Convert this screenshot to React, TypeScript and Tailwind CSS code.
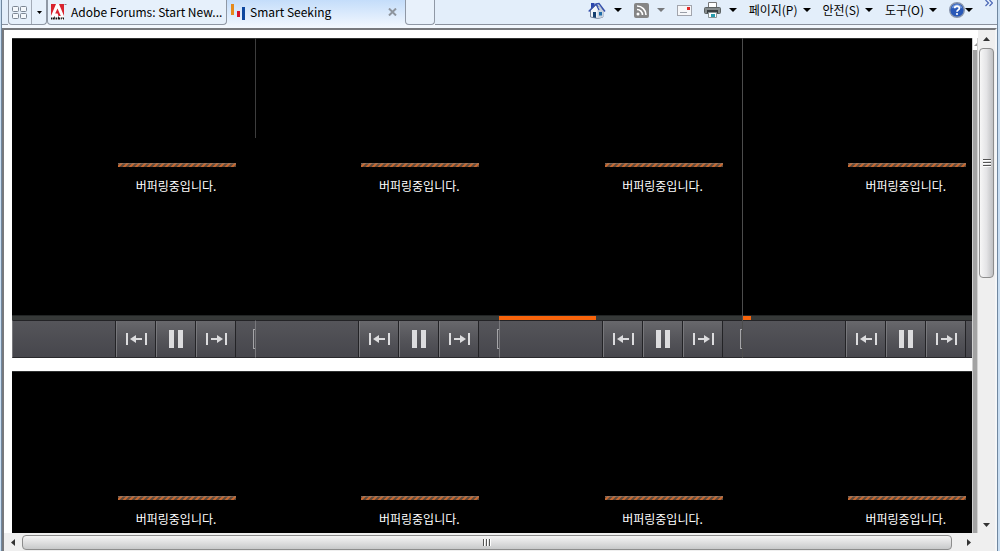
import type { ReactNode } from 'react';

interface Player {
  id: number;
  buffered: number;
}

const TOP_PLAYERS: Player[] = [
  { id: 1, buffered: 0 },
  { id: 2, buffered: 0 },
  { id: 3, buffered: 40 },
  { id: 4, buffered: 4 },
];

const BOTTOM_PLAYERS: Player[] = [
  { id: 5, buffered: 0 },
  { id: 6, buffered: 0 },
  { id: 7, buffered: 0 },
  { id: 8, buffered: 0 },
];

const Caret = ({ className = 'text-black' }: { className?: string }) => (
  <svg viewBox="0 0 8 4" className={`h-1 w-2 shrink-0 ${className}`} fill="currentColor">
    <path d="M0 0h8L4 4z" />
  </svg>
);

const QuickTabsIcon = () => (
  <svg viewBox="0 0 16 13" className="h-[13px] w-4" fill="#f4f8fc" stroke="#7d8794">
    <rect x="0.5" y="0.5" width="6" height="5" rx="1" />
    <rect x="8.5" y="0.5" width="6" height="5" rx="1" />
    <rect x="0.5" y="7.5" width="6" height="5" rx="1" />
    <rect x="8.5" y="7.5" width="6" height="5" rx="1" />
  </svg>
);

const AdobeIcon = () => (
  <svg viewBox="0 0 16 16" className="h-4 w-4 shrink-0">
    <path fill="#fff" d="M0 0h13v16H0z" />
    <path fill="#d9232e" d="M0 0h5L0 12zM8 0h5v12zM6.500 4.500L9.800 12H7.500L6.600 9.500H4.200z" />
    <path fill="#111" d="M0 15.500V13.500h1.500v2zM2 15.500h1.800V12.500H3v1H2zM4.500 13.500h1.800v2H4.500zM7 12.500h.8v1h1.200v2H7zM9.700 13.500h2v1h-1v1h-1zM12 13.500h1v2h-1z" />
    <path stroke="#555" strokeWidth="0.700" d="M13.500 0.500h2" />
  </svg>
);

const SeekingIcon = () => (
  <svg viewBox="0 0 14 16" className="h-4 w-[14px] shrink-0">
    <path fill="#e58a1c" d="M0 0h3v11H0z" />
    <path fill="#d8132b" d="M6 7h3v6H6z" />
    <path fill="#0d479f" d="M11 3h3v13h-3z" />
  </svg>
);

const HomeIcon = () => (
  <svg viewBox="0 0 18 17" className="h-[17px] w-[18px]">
    <path fill="#2a45ad" d="M3 1h3.500v5H3z" />
    <path fill="#f2f5f9" stroke="#76829a" d="M2.500 8l6-5.500L15 8v7l-5 1.500-7.500-1.500z" />
    <path fill="#c9d2df" d="M9.500 8L12 4.500 15.500 9v6l-6 1.500z" />
    <path fill="none" stroke="#3650ac" strokeWidth="1.400" d="M.7 9.500L8 2l3-.5 6 8M8 2l3 6" />
    <path fill="#17406f" d="M5 10h3v6l-3-.7z" />
    <path fill="#1f6da8" d="M11 10h3v3.500h-3z" />
  </svg>
);

const FeedIcon = () => (
  <svg viewBox="0 0 15 15" className="h-[15px] w-[15px]">
    <rect width="15" height="15" rx="2" fill="#858585" />
    <circle cx="4" cy="11" r="1.500" fill="#fff" />
    <path fill="none" stroke="#fff" strokeWidth="1.600" d="M3 6.500a5.500 5.500 0 0 1 5.500 5.500M3 3a9 9 0 0 1 9 9" />
  </svg>
);

const MailIcon = () => (
  <svg viewBox="0 0 15 11" className="h-[11px] w-[15px]">
    <rect x="0.500" y="0.500" width="14" height="10" fill="#f6f7f9" stroke="#a2a5ad" />
    <path fill="#e22a28" d="M10 2h3v3h-3z" />
    <path stroke="#9a9fa8" d="M3 7.500h7" />
  </svg>
);

const PrinterIcon = () => (
  <svg viewBox="0 0 17 16" className="h-4 w-[17px]">
    <path fill="#fff" stroke="#777" d="M4.500 6V.500h8V6" />
    <rect x="0.500" y="5.500" width="16" height="6" rx="1" fill="#858b8c" stroke="#5d6364" />
    <path fill="#383d40" d="M3 8h11v3H3z" />
    <path fill="#fff" stroke="#8a9496" d="M4.500 10.500h8v5h-8z" />
    <path fill="#269cae" d="M7 12h4v3H7z" />
  </svg>
);

const HelpIcon = () => (
  <svg viewBox="0 0 16 16" className="h-4 w-4">
    <circle cx="8" cy="8" r="7.300" fill="#2858b8" stroke="#8996ad" strokeWidth="1.400" />
    <path fill="#6d94dc" d="M2.500 6.500a5.700 5.700 0 0 1 11 0Q8 3.500 2.500 6.500z" />
    <path fill="none" stroke="#fff" strokeWidth="1.800" d="M5.700 6.300C5.700 3.500 10.500 3.600 10.400 6.200 10.300 7.800 8 8 8 9.800" />
    <circle cx="8" cy="12" r="1.100" fill="#fff" />
  </svg>
);

const StepBackIcon = () => (
  <svg viewBox="-2 0 24 12" className="h-3 w-6" fill="#dcdcde">
    <path d="M0 0h2v12H0zM19 0h2v12h-2zM4 6l6-4v3h6v2h-6v3z" />
  </svg>
);

const StepForwardIcon = () => (
  <svg viewBox="-2 0 24 12" className="h-3 w-6" fill="#dcdcde">
    <path d="M0 0h2v12H0zM19 0h2v12h-2zM17 6l-6-4v3H5v2h6v3z" />
  </svg>
);

const PauseIcon = () => (
  <svg viewBox="0 0 14 18" className="h-[18px] w-[14px]" fill="#dcdcde">
    <path d="M0 0h5v18H0zM9 0h5v18H9z" />
  </svg>
);

const Command = ({ label, children }: { label: string; children: ReactNode }) => (
  <button type="button" aria-label={label} className="flex items-center gap-2">
    {children}
  </button>
);

const MenuCommand = ({ text }: { text: string }) => (
  <button type="button" className="flex items-center gap-[5px] whitespace-nowrap">
    {text}
    <Caret />
  </button>
);

const BrowserBar = () => (
  <header className="flex h-7 shrink-0 items-start bg-[#f3f8fe] text-xs leading-4 text-black">
    <div className="h-[25px] w-[6px] border-b border-[#8b929e] bg-[#e3eefa]" />
    <div className="flex h-[25px] rounded-b-sm border border-t-0 border-[#8f98a5] bg-[#e6f0fb]">
      <button type="button" aria-label="Quick tabs" className="flex w-[23px] items-center justify-center border-r border-[#a3abb7]">
        <QuickTabsIcon />
      </button>
      <button type="button" aria-label="Tab list" className="flex w-[14px] items-center justify-center">
        <svg viewBox="0 0 5 3" className="h-[3px] w-[5px]">
          <path d="M0 0h5L2.500 3z" />
        </svg>
      </button>
    </div>
    <a href="#forums" className="flex h-[25px] w-[180px] items-center gap-1 rounded-b-sm border border-t-0 border-[#8f98a5] bg-[#e6f0fb] pl-[3px] whitespace-nowrap">
      <AdobeIcon />
      Adobe Forums: Start New...
    </a>
    <div className="flex h-7 w-[178px] items-start gap-[5px] bg-linear-to-b from-[#c4ddfa] to-[#f3f8fe] pt-1 pl-1">
      <SeekingIcon />
      <a href="#seeking" className="flex-1 whitespace-nowrap">Smart Seeking</a>
      <button type="button" aria-label="Close tab" className="mt-1 mr-2 h-2 w-[9px]">
        <svg viewBox="0 0 9 8" className="h-2 w-[9px]" stroke="#8e959e" strokeWidth="2">
          <path d="M1 0.500l7 7M8 0.500l-7 7" />
        </svg>
      </button>
    </div>
    <button type="button" aria-label="New tab" className="h-[25px] w-[30px] rounded-b-sm border border-t-0 border-[#8f98a5] bg-[#e8f1fb]" />
    <nav className="flex h-[25px] flex-1 items-center justify-end gap-3 border-b border-[#8b929e] bg-[#e3eefa] pr-1 pb-1">
      <Command label="Home">
        <HomeIcon />
        <Caret />
      </Command>
      <Command label="Feeds">
        <FeedIcon />
        <Caret className="text-[#77797c]" />
      </Command>
      <Command label="Mail">
        <MailIcon />
      </Command>
      <Command label="Print">
        <PrinterIcon />
        <Caret />
      </Command>
      <MenuCommand text="페이지(P)" />
      <MenuCommand text="안전(S)" />
      <MenuCommand text="도구(O)" />
      <button type="button" aria-label="Help" className="flex items-center">
        <HelpIcon />
        <Caret />
      </button>
      <button type="button" aria-label="More commands" className="self-start">
        <svg viewBox="0 0 8 7" className="h-[7px] w-2" fill="none" stroke="#4a66b5" strokeWidth="1.200">
          <path d="M0.500 0l3 3-3 3M4.500 0l3 3-3 3" />
        </svg>
      </button>
    </nav>
  </header>
);

const ControlButton = ({ label, children }: { label: string; children: ReactNode }) => (
  <button
    type="button"
    aria-label={label}
    className="flex w-10 items-center justify-center border-r border-l border-r-[#232326] border-l-[#77777b] bg-linear-to-b from-[#68686c] via-[#55555a] to-[#47474d]"
  >
    {children}
  </button>
);

const PlayerPane = ({ player }: { player: Player }) => (
  <section className="min-w-0">
    <div className="h-[277px] border-t border-[#2e3030] bg-black pt-[124px]">
      <div className="ml-[106px] w-[118px]">
        <svg className="h-1 w-full" aria-hidden="true">
          <defs>
            <pattern id={`stripe-${player.id}`} width="6" height="4" patternUnits="userSpaceOnUse">
              <rect width="6" height="4" fill="#5e4a3c" />
              <path stroke="#c9682f" strokeWidth="2" d="M-1 5l6-6M5 5l6-6M-7 5l6-6" />
              <path fill="#8a827c" fillOpacity="0.500" d="M0 0h6v1H0z" />
            </pattern>
          </defs>
          <rect width="100%" height="4" fill={`url(#stripe-${player.id})`} />
        </svg>
        <p className="mt-[11px] -ml-[2px] text-center text-xs leading-4 whitespace-nowrap text-white">버퍼링중입니다.</p>
      </div>
    </div>
    <div className="h-[5px] border-t border-[#222525] bg-[#363938]">
      <div className="h-1 bg-[#f8640c]" style={{ width: `${player.buffered}%` }} />
    </div>
    <div className="flex h-[38px] border-t border-b border-l border-t-[#232326] border-b-[#29292c] border-l-[#77777b] bg-linear-to-b from-[#55555a] to-[#46464c]">
      <div className="w-[103px] border-r border-[#232326]" />
      <ControlButton label="Previous">
        <StepBackIcon />
      </ControlButton>
      <ControlButton label="Pause">
        <PauseIcon />
      </ControlButton>
      <ControlButton label="Next">
        <StepForwardIcon />
      </ControlButton>
      <div className="flex flex-1 items-center justify-end">
        <div className="h-5 w-[2px] border-y border-l border-[#a5a5a8]" />
      </div>
    </div>
  </section>
);

const PlayerRow = ({ players, children }: { players: Player[]; children?: ReactNode }) => (
  <div className="relative shrink-0 overflow-hidden">
    <div className="-mr-[13px] grid grid-cols-4">
      {players.map((player) => (
        <PlayerPane key={player.id} player={player} />
      ))}
    </div>
    {children}
  </div>
);

const VerticalScrollbar = () => (
  <div className="flex w-[17px] shrink-0 flex-col items-center bg-[#efefef]">
    <button type="button" aria-label="Scroll up" className="flex h-[18px] w-full items-center justify-center">
      <svg viewBox="0 0 7 4" className="h-1 w-[7px]" fill="#333">
        <path d="M0 4h7L3.500 0z" />
      </svg>
    </button>
    <div className="flex h-[230px] w-[15px] flex-col items-center justify-center gap-px rounded-sm border border-[#8d8d8d] bg-linear-to-r from-[#f7f7f7] via-[#e4e4e6] to-[#bfc0c2]">
      <div className="h-[2px] w-2 border-b border-white bg-[#555]" />
      <div className="h-[2px] w-2 border-b border-white bg-[#555]" />
      <div className="h-[2px] w-2 border-b border-white bg-[#555]" />
    </div>
    <button type="button" aria-label="Scroll down" className="mt-auto flex h-4 w-full items-center justify-center">
      <svg viewBox="0 0 7 4" className="h-1 w-[7px]" fill="#333">
        <path d="M0 0h7L3.500 4z" />
      </svg>
    </button>
  </div>
);

const HorizontalScrollbar = () => (
  <div className="flex h-[18px] shrink-0 items-center bg-[#efefef] pr-[17px]">
    <button type="button" aria-label="Scroll left" className="flex h-full w-[18px] items-center justify-center">
      <svg viewBox="0 0 4 7" className="h-[7px] w-1" fill="#333">
        <path d="M4 0v7L0 3.500z" />
      </svg>
    </button>
    <div className="flex h-[15px] flex-1 items-center justify-center gap-px rounded-sm border border-[#8d8d8d] bg-linear-to-b from-[#f5f5f5] via-[#dfdfe0] to-[#c8c9ca]">
      <div className="h-[7px] w-[2px] border-r border-white bg-[#555]" />
      <div className="h-[7px] w-[2px] border-r border-white bg-[#555]" />
      <div className="h-[7px] w-[2px] border-r border-white bg-[#555]" />
    </div>
    <button type="button" aria-label="Scroll right" className="ml-2 flex h-full w-[18px] items-center justify-center">
      <svg viewBox="0 0 4 7" className="h-[7px] w-1" fill="#333">
        <path d="M0 0v7l4-3.500z" />
      </svg>
    </button>
  </div>
);

export default function App() {
  return (
    <div className="flex h-screen overflow-hidden bg-[#c9def2] font-['Noto_Sans_CJK_KR',sans-serif]">
      <div className="mr-[2px] ml-px flex min-w-0 flex-1 flex-col border-r border-l border-[#70879f] bg-white">
        <BrowserBar />
        <div className="flex min-h-0 flex-1 flex-col border-t-2 border-r-2 border-l-2 border-[#77797d] border-r-[#f4f6f8]">
          <div className="flex min-h-0 flex-1">
            <main className="min-w-0 flex-1 overflow-hidden pt-2 pl-2">
              <div className="flex h-full">
                <div className="flex min-w-0 flex-1 flex-col gap-[13px]">
                  <PlayerRow players={TOP_PLAYERS}>
                    {/* pane dividers drawn over the video area */}
                    <div className="absolute top-0 left-[243px] h-[100px] w-px bg-[#3d3d3d]" />
                    <div className="absolute top-0 left-[730px] h-full w-px bg-[#4c4c4c]" />
                  </PlayerRow>
                  <PlayerRow players={BOTTOM_PLAYERS} />
                </div>
                <div className="flex w-[6px] flex-col border-x border-[#d0d0d0] bg-[#a3a3a3]">
                  <div className="flex h-3 items-end justify-end bg-white">
                    <svg viewBox="0 0 3 3" className="mb-1 h-[3px] w-[3px]" fill="#999">
                      <path d="M0 3h3V0z" />
                    </svg>
                  </div>
                </div>
              </div>
            </main>
            <VerticalScrollbar />
          </div>
          <HorizontalScrollbar />
        </div>
      </div>
    </div>
  );
}
